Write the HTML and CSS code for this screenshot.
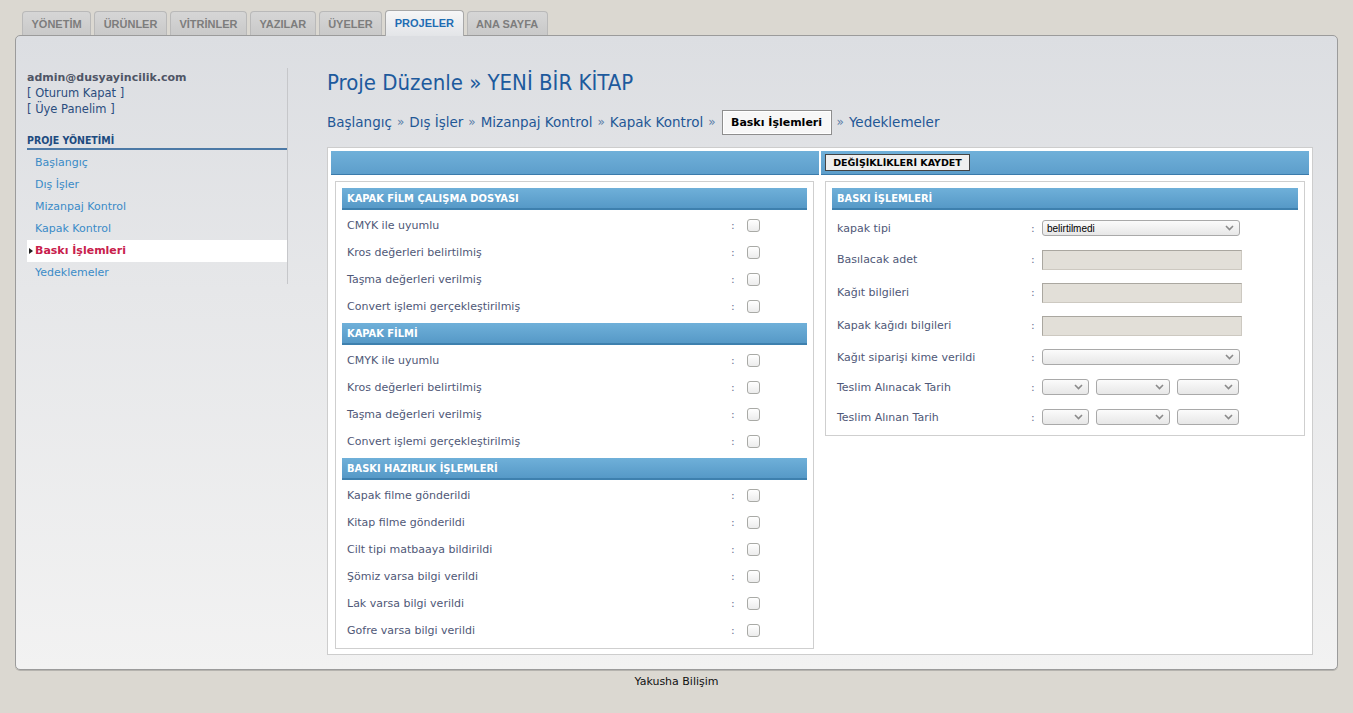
FILE: index.html
```html
<!DOCTYPE html>
<html lang="tr">
<head>
<meta charset="utf-8">
<title>Proje Düzenle</title>
<link rel="stylesheet" href="styles.css">
</head>
<body>
<div class="tabs">
  <a class="tab">YÖNETİM</a>
  <a class="tab">ÜRÜNLER</a>
  <a class="tab">VİTRİNLER</a>
  <a class="tab">YAZILAR</a>
  <a class="tab">ÜYELER</a>
  <a class="tab active">PROJELER</a>
  <a class="tab">ANA SAYFA</a>
</div>
<div class="panel">
  <aside class="sidebar">
    <div class="user">admin@dusyayincilik.com</div>
    <div class="ulink">[ Oturum Kapat ]</div>
    <div class="ulink">[ Üye Panelim ]</div>
    <div class="side-title">PROJE YÖNETİMİ</div>
    <ul class="side-menu">
      <li>Başlangıç</li>
      <li>Dış İşler</li>
      <li>Mizanpaj Kontrol</li>
      <li>Kapak Kontrol</li>
      <li class="current"><span class="marker"></span>Baskı İşlemleri</li>
      <li>Yedeklemeler</li>
    </ul>
  </aside>
  <main class="main">
    <h1 class="title">Proje Düzenle » YENİ BİR KİTAP</h1>
    <nav class="crumbs">
      <span>Başlangıç</span><span class="sep">»</span>
      <span>Dış İşler</span><span class="sep">»</span>
      <span>Mizanpaj Kontrol</span><span class="sep">»</span>
      <span>Kapak Kontrol</span><span class="sep">»</span>
      <span class="crumb-active">Baskı İşlemleri</span><span class="sep">»</span>
      <span>Yedeklemeler</span>
    </nav>
    <div class="content">
      <section class="col">
        <div class="col-head"></div>
        <div class="box">
          <div class="sec-head">KAPAK FİLM ÇALIŞMA DOSYASI</div>
          <div class="rows">
            <div class="row"><span>CMYK ile uyumlu</span><span class="colon">:</span><span class="cb"></span></div>
            <div class="row"><span>Kros değerleri belirtilmiş</span><span class="colon">:</span><span class="cb"></span></div>
            <div class="row"><span>Taşma değerleri verilmiş</span><span class="colon">:</span><span class="cb"></span></div>
            <div class="row"><span>Convert işlemi gerçekleştirilmiş</span><span class="colon">:</span><span class="cb"></span></div>
          </div>
          <div class="sec-head">KAPAK FİLMİ</div>
          <div class="rows">
            <div class="row"><span>CMYK ile uyumlu</span><span class="colon">:</span><span class="cb"></span></div>
            <div class="row"><span>Kros değerleri belirtilmiş</span><span class="colon">:</span><span class="cb"></span></div>
            <div class="row"><span>Taşma değerleri verilmiş</span><span class="colon">:</span><span class="cb"></span></div>
            <div class="row"><span>Convert işlemi gerçekleştirilmiş</span><span class="colon">:</span><span class="cb"></span></div>
          </div>
          <div class="sec-head">BASKI HAZIRLIK İŞLEMLERİ</div>
          <div class="rows last">
            <div class="row"><span>Kapak filme gönderildi</span><span class="colon">:</span><span class="cb"></span></div>
            <div class="row"><span>Kitap filme gönderildi</span><span class="colon">:</span><span class="cb"></span></div>
            <div class="row"><span>Cilt tipi matbaaya bildirildi</span><span class="colon">:</span><span class="cb"></span></div>
            <div class="row"><span>Şömiz varsa bilgi verildi</span><span class="colon">:</span><span class="cb"></span></div>
            <div class="row"><span>Lak varsa bilgi verildi</span><span class="colon">:</span><span class="cb"></span></div>
            <div class="row"><span>Gofre varsa bilgi verildi</span><span class="colon">:</span><span class="cb"></span></div>
          </div>
        </div>
      </section>
      <section class="col">
        <div class="col-head"><span class="save">DEĞİŞİKLİKLERİ KAYDET</span></div>
        <div class="box box-right">
          <div class="sec-head">BASKI İŞLEMLERİ</div>
          <div class="frows">
            <div class="frow first"><span>kapak tipi</span><span class="colon">:</span>
              <span class="sel w198"><span class="sel-text">belirtilmedi</span><svg class="chev" width="9" height="6" viewBox="0 0 9 6"><path d="M1 1l3.5 3.5L8 1" fill="none" stroke="#8a8a8a" stroke-width="1.6"/></svg></span></div>
            <div class="frow inp-row"><span>Basılacak adet</span><span class="colon">:</span><span class="inp"></span></div>
            <div class="frow inp-row"><span>Kağıt bilgileri</span><span class="colon">:</span><span class="inp"></span></div>
            <div class="frow inp-row"><span>Kapak kağıdı bilgileri</span><span class="colon">:</span><span class="inp"></span></div>
            <div class="frow"><span>Kağıt siparişi kime verildi</span><span class="colon">:</span>
              <span class="sel w198"><span class="sel-text"></span><svg class="chev" width="9" height="6" viewBox="0 0 9 6"><path d="M1 1l3.5 3.5L8 1" fill="none" stroke="#8a8a8a" stroke-width="1.6"/></svg></span></div>
            <div class="frow"><span>Teslim Alınacak Tarih</span><span class="colon">:</span>
              <span class="dates">
                <span class="sel w47"><span class="sel-text"></span><svg class="chev" width="9" height="6" viewBox="0 0 9 6"><path d="M1 1l3.5 3.5L8 1" fill="none" stroke="#8a8a8a" stroke-width="1.6"/></svg></span>
                <span class="sel w74"><span class="sel-text"></span><svg class="chev" width="9" height="6" viewBox="0 0 9 6"><path d="M1 1l3.5 3.5L8 1" fill="none" stroke="#8a8a8a" stroke-width="1.6"/></svg></span>
                <span class="sel w62"><span class="sel-text"></span><svg class="chev" width="9" height="6" viewBox="0 0 9 6"><path d="M1 1l3.5 3.5L8 1" fill="none" stroke="#8a8a8a" stroke-width="1.6"/></svg></span>
              </span></div>
            <div class="frow"><span>Teslim Alınan Tarih</span><span class="colon">:</span>
              <span class="dates">
                <span class="sel w47"><span class="sel-text"></span><svg class="chev" width="9" height="6" viewBox="0 0 9 6"><path d="M1 1l3.5 3.5L8 1" fill="none" stroke="#8a8a8a" stroke-width="1.6"/></svg></span>
                <span class="sel w74"><span class="sel-text"></span><svg class="chev" width="9" height="6" viewBox="0 0 9 6"><path d="M1 1l3.5 3.5L8 1" fill="none" stroke="#8a8a8a" stroke-width="1.6"/></svg></span>
                <span class="sel w62"><span class="sel-text"></span><svg class="chev" width="9" height="6" viewBox="0 0 9 6"><path d="M1 1l3.5 3.5L8 1" fill="none" stroke="#8a8a8a" stroke-width="1.6"/></svg></span>
              </span></div>
          </div>
        </div>
      </section>
    </div>
  </main>
</div>
<footer class="footer">Yakusha Bilişim</footer>
</body>
</html>
```
FILE: styles.css
```css
* { box-sizing: border-box; }
html, body { margin: 0; padding: 0; }
body {
  background: #dbd8d1;
  font-family: "DejaVu Sans", Verdana, sans-serif;
  font-size: 11px;
  color: #333;
  width: 1353px;
  height: 713px;
  overflow: hidden;
}

/* tabs */
.tabs {
  display: flex;
  gap: 3px;
  padding: 11px 0 0 22px;
  height: 36px;
  position: relative;
  z-index: 2;
}
.tab {
  height: 24px;
  padding: 0 8.5px;
  display: flex;
  align-items: center;
  font-family: "Liberation Sans", Arial, sans-serif;
  font-weight: bold;
  font-size: 11px;
  color: #7d7d7d;
  background: linear-gradient(#d6d6d6, #c9c9c9);
  border: 1px solid #b9b9b9;
  border-bottom: none;
  border-radius: 4px 4px 0 0;
}
.tab.active {
  margin-top: -1px;
  height: 26px;
  color: #1f6db3;
  background: linear-gradient(#f6f6f7, #e3e5e8);
  border-color: #a8a8a8;
  padding: 0 8.5px 1px;
}

/* panel */
.panel {
  margin: -1px 15px 0 15px;
  height: 635px;
  border: 1px solid #9b9b9b;
  border-radius: 5px;
  background: linear-gradient(#dcdee2 0%, #e6e7e9 40%, #f2f2f2 100%);
  display: flex;
  align-items: flex-start;
  padding: 32px 24px 0 11px;
  box-shadow: 0 1px 0 #b5b3ae;
}

.sidebar {
  width: 261px;
  flex: none;
  border-right: 1px solid #c6c7ca;
  padding-top: 2px;
}
.user {
  font-weight: bold;
  color: #4f5566;
  line-height: 16px;
}
.ulink {
  color: #2b4d7e;
  font-size: 11.5px;
  line-height: 15.5px;
}
.side-title {
  margin-top: 17px;
  font-family: "DejaVu Sans Condensed", "DejaVu Sans", sans-serif;
  font-weight: bold;
  font-size: 10.5px;
  color: #1d4b7f;
  padding-bottom: 2px;
  border-bottom: 2px solid #4c79a6;
}
.side-menu {
  list-style: none;
  margin: 2px 0 0 0;
  padding: 0;
}
.side-menu li {
  height: 22px;
  line-height: 22px;
  padding-left: 8px;
  color: #3a8bc7;
  position: relative;
}
.side-menu li.current {
  background: #ffffff;
  color: #c8204c;
  font-weight: bold;
}
.marker {
  position: absolute;
  left: 2px;
  top: 8px;
  width: 0;
  height: 0;
  border-top: 3px solid transparent;
  border-bottom: 3px solid transparent;
  border-left: 4px solid #222;
}

/* main */
.main {
  margin-left: 39px;
  width: 986px;
  flex: none;
}
.title {
  margin: 0;
  font-family: "DejaVu Sans Condensed", "DejaVu Sans", sans-serif;
  font-weight: normal;
  font-size: 22px;
  color: #1d5a9d;
  line-height: 30px;
}
.crumbs {
  margin-top: 11px;
  display: flex;
  align-items: center;
  font-size: 13.5px;
  color: #1f5796;
  height: 26px;
}
.sep { color: #5b7ea8; margin: 0 5px; font-size: 12px; }
.crumb-active {
  font-size: 11px;
  font-weight: bold;
  color: #000;
  background: #f7f7f7;
  border: 1px solid #8e8e8e;
  box-shadow: inset 0 0 0 1px #fff;
  height: 25px;
  width: 110px;
  justify-content: center;
  display: flex;
  align-items: center;
  margin: 0 0 0 1px;
}

.content {
  margin-top: 12px;
  background: #fff;
  border: 1px solid #cdcdcd;
  padding: 3px;
  display: flex;
  gap: 2px;
  height: 508px;
  align-items: flex-start;
}
.col { width: 488px; flex: none; }
.col-head {
  height: 24px;
  background: linear-gradient(#70b0d9, #5d9ecb);
  border-bottom: 1px solid #3b7bab;
  display: flex;
  align-items: center;
  padding-left: 4px;
}
.save {
  font-weight: bold;
  font-size: 9.5px;
  color: #000;
  background: #efefef;
  border: 1px solid #444;
  height: 17px;
  width: 145px;
  display: flex;
  align-items: center;
  justify-content: center;
}
.box {
  margin: 6px 5px 4px 4px;
  border: 1px solid #cfcfcf;
  padding: 6px 6px 4px 6px;
}
.box-right { margin-left: 4px; margin-right: 4px; padding-bottom: 3px; }

.sec-head {
  height: 22px;
  background: linear-gradient(#6fb0d9, #5699c7);
  border-bottom: 2px solid #3e80ae;
  color: #fff;
  font-family: "DejaVu Sans Condensed", "DejaVu Sans", sans-serif;
  font-weight: bold;
  font-size: 11px;
  padding-left: 5px;
  display: flex;
  align-items: center;
}
.rows { margin: 2px 0 3px; }
.rows.last { margin-bottom: 0; }
.row {
  height: 27px;
  display: grid;
  grid-template-columns: 384px 16px 13px;
  align-items: center;
  padding-left: 5px;
  color: #4f5877;
}
.colon { color: #6a7390; }
.cb {
  width: 13px;
  height: 13px;
  border: 1px solid #a9aaa6;
  border-radius: 3px;
  background: linear-gradient(#ffffff, #ececec);
}

.frows { margin-top: 2px; }
.frow {
  height: 30px;
  display: grid;
  grid-template-columns: 194px 11px auto;
  align-items: center;
  padding-left: 5px;
  color: #4f5877;
}
.frow.first { margin-top: 3px; }
.frow.inp-row { height: 33px; }
.inp {
  width: 200px;
  height: 20px;
  background: #e2dfd8;
  border: 1px solid #cdc9c1;
  border-top-color: #aaa7a0;
  border-left-color: #aaa7a0;
}
.sel {
  height: 16px;
  border: 1px solid #a9a9a9;
  border-radius: 3px;
  background: linear-gradient(#fbfbfb, #e7e7e7);
  display: flex;
  align-items: center;
  justify-content: space-between;
  padding: 0 5px 0 4px;
}
.sel-text {
  font-family: "Liberation Sans", Arial, sans-serif;
  font-size: 10px;
  color: #000;
}
.w198 { width: 198px; }
.w47 { width: 47px; }
.w74 { width: 74px; }
.w62 { width: 62px; }
.dates { display: flex; gap: 7px; }
.chev { flex: none; }

.footer {
  text-align: center;
  margin-top: 5px;
  color: #111;
  font-size: 11px;
}
```
